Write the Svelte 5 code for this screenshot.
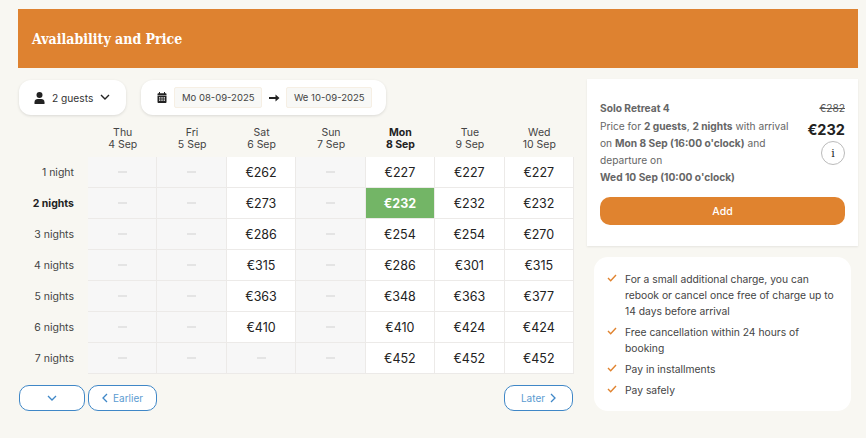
<script>
  const days = [
    { name: "Thu", date: "4 Sep" },
    { name: "Fri", date: "5 Sep" },
    { name: "Sat", date: "6 Sep" },
    { name: "Sun", date: "7 Sep" },
    { name: "Mon", date: "8 Sep", active: true },
    { name: "Tue", date: "9 Sep" },
    { name: "Wed", date: "10 Sep" }
  ];

  const rows = [
    { label: "1 night", prices: [0, 0, 262, 0, 227, 227, 227] },
    { label: "2 nights", bold: true, prices: [0, 0, 273, 0, 232, 232, 232] },
    { label: "3 nights", prices: [0, 0, 286, 0, 254, 254, 270] },
    { label: "4 nights", prices: [0, 0, 315, 0, 286, 301, 315] },
    { label: "5 nights", prices: [0, 0, 363, 0, 348, 363, 377] },
    { label: "6 nights", prices: [0, 0, 410, 0, 410, 424, 424] },
    { label: "7 nights", prices: [0, 0, 0, 0, 452, 452, 452] }
  ];

  const perks = [
    "For a small additional charge, you can rebook or cancel once free of charge up to 14 days before arrival",
    "Free cancellation within 24 hours of booking",
    "Pay in installments",
    "Pay safely"
  ];
</script>

<div class="page">
  <header class="banner"><h1>Availability and Price</h1></header>

  <div class="columns">
    <section class="left">
      <div class="controls">
        <button class="pill guests">
          <svg width="11" height="12" viewBox="0 0 11 12"><circle cx="5.5" cy="3" r="3" fill="#222" /><path d="M0.5 12V10.2C0.5 8.2 2 7 3.8 7H7.2C9 7 10.5 8.2 10.5 10.2V12Z" fill="#222" /></svg>
          <span>2 guests</span>
          <svg width="10" height="7" viewBox="0 0 10 7"><path d="M1 1L5 5L9 1" fill="none" stroke="#222" stroke-width="1.4" /></svg>
        </button>
        <div class="pill dates">
          <svg width="10" height="11" viewBox="0 0 10 11"><path d="M0.5 2.2C0.5 1.6 1 1.2 1.5 1.2H2V0H3V1.2H7V0H8V1.2H8.5C9 1.2 9.5 1.6 9.5 2.2V3.4H0.5ZM0.5 4H9.5V10C9.5 10.6 9 11 8.5 11H1.5C1 11 0.5 10.6 0.5 10ZM2 5.2V6.4H3.4V5.2ZM4.3 5.2V6.4H5.7V5.2ZM6.6 5.2V6.4H8V5.2ZM2 7.6V8.8H3.4V7.6ZM4.3 7.6V8.8H5.7V7.6ZM6.6 7.6V8.8H8V7.6Z" fill="#222" fill-rule="evenodd" /></svg>
          <span class="date">Mo 08-09-2025</span>
          <svg width="11" height="8" viewBox="0 0 11 8"><path d="M0 3H6.5V0.5L10.5 4L6.5 7.5V5H0Z" fill="#222" /></svg>
          <span class="date">We 10-09-2025</span>
        </div>
      </div>

      <div class="table">
        <div class="corner"></div>
        {#each days as day}
          <div class="head" class:active={day.active}>{day.name}<br />{day.date}</div>
        {/each}

        {#each rows as row}
          <div class="label" class:bold={row.bold}>{row.label}</div>
          {#each row.prices as price, i}
            {#if price}
              <div class="cell" class:selected={row.bold && i === 4}>€{price}</div>
            {:else}
              <div class="cell empty"><i></i></div>
            {/if}
          {/each}
        {/each}
      </div>

      <div class="pager">
        <button class="nav down" aria-label="More nights">
          <svg width="10" height="6" viewBox="0 0 10 6"><path d="M1 1L5 5L9 1" fill="none" stroke="#3f87c7" stroke-width="1.3" /></svg>
        </button>
        <button class="nav earlier">
          <svg width="6" height="10" viewBox="0 0 6 10"><path d="M5 1L1 5L5 9" fill="none" stroke="#3f87c7" stroke-width="1.3" /></svg>
          Earlier
        </button>
        <button class="nav later">
          Later
          <svg width="6" height="10" viewBox="0 0 6 10"><path d="M1 1L5 5L1 9" fill="none" stroke="#3f87c7" stroke-width="1.3" /></svg>
        </button>
      </div>
    </section>

    <aside class="right">
      <div class="summary">
        <div class="summary-top">
          <div class="text">
            <strong class="title">Solo Retreat 4</strong>
            <p>Price for <b>2 guests</b>, <b>2 nights</b> with arrival on <b>Mon 8 Sep (16:00 o'clock)</b> and departure on <br /><b>Wed 10 Sep (10:00 o'clock)</b></p>
          </div>
          <div class="price">
            <s>€282</s>
            <span class="total">€232</span>
            <span class="info">i</span>
          </div>
        </div>
        <button class="add">Add</button>
      </div>

      <ul class="perks">
        {#each perks as perk}
          <li>
            <svg width="10" height="8" viewBox="0 0 10 8"><path d="M1 4L3.7 6.7L9 1" fill="none" stroke="#e0832f" stroke-width="1.4" /></svg>
            <span>{perk}</span>
          </li>
        {/each}
      </ul>
    </aside>
  </div>
</div>

<style>
  :global(body) {
    background: #f8f7f2;
    font-family: "Inter", "Liberation Sans", sans-serif;
    color: #222;
  }

  .page {
    width: 866px;
    height: 438px;
    box-sizing: border-box;
    padding: 9px 8px 0 18px;
    overflow: hidden;
  }

  .banner {
    height: 59px;
    background: #de8230;
    display: flex;
    align-items: center;
    padding-left: 14px;
  }

  h1 {
    margin: 0;
    font-family: "DejaVu Serif", serif;
    font-stretch: condensed;
    font-weight: 700;
    font-size: 14px;
    color: #fff;
  }

  .columns {
    display: flex;
    justify-content: space-between;
  }

  .left {
    width: 556px;
    padding-top: 12px;
  }

  .controls {
    display: flex;
    gap: 15px;
    padding-left: 1px;
  }

  .pill {
    height: 35px;
    box-sizing: border-box;
    background: #fff;
    border: 0;
    border-radius: 12px;
    box-shadow: 0 1px 3px rgba(0, 0, 0, 0.12);
    display: flex;
    align-items: center;
    font-family: inherit;
    font-size: 10.2px;
    color: #333;
  }

  .guests {
    width: 107px;
    padding: 0 0 0 15px;
    gap: 7px;
  }

  .dates {
    width: 245px;
    padding-left: 16px;
    gap: 7px;
  }

  .date {
    height: 21px;
    box-sizing: border-box;
    padding: 0 7px;
    background: #f8f8f6;
    border: 1px solid #f6efe4;
    border-radius: 2px;
    display: flex;
    align-items: center;
    font-size: 9.5px;
    color: #444;
  }

  .date:last-child {
    padding: 0 6.5px;
    margin-left: -1px;
  }

  .table {
    display: grid;
    grid-template-columns: 70px repeat(7, 1fr);
    grid-template-rows: 32px repeat(7, 31px);
    margin-top: 10px;
  }

  .head {
    padding-top: 2px;
    text-align: center;
    font-size: 10.5px;
    line-height: 12px;
    color: #444;
  }

  .head.active {
    font-weight: 700;
    color: #222;
  }

  .label {
    display: flex;
    align-items: center;
    justify-content: flex-end;
    padding-right: 14px;
    font-size: 10.5px;
    color: #444;
  }

  .label.bold {
    font-weight: 700;
    color: #222;
  }

  .cell {
    background: #fff;
    border-right: 1px solid #eceae8;
    border-bottom: 1px solid #eceae8;
    display: flex;
    align-items: center;
    justify-content: center;
    font-size: 12.5px;
    color: #222;
  }

  .cell.empty {
    background: #f7f7f7;
  }

  .cell.empty i {
    width: 9px;
    height: 2px;
    background: #e4e4e4;
  }

  .cell.selected {
    background: #73b566;
    color: #fff;
    font-weight: 700;
  }

  .pager {
    display: flex;
    gap: 3px;
    margin-top: 11px;
    padding-left: 1px;
  }

  .nav {
    height: 26px;
    box-sizing: border-box;
    background: #fff;
    border: 1px solid #3f87c7;
    border-radius: 10px;
    display: flex;
    align-items: center;
    justify-content: center;
    gap: 5px;
    padding: 0;
    font-family: inherit;
    font-size: 10px;
    color: #5b9bd1;
  }

  .down {
    width: 66px;
  }

  .earlier {
    width: 69px;
  }

  .later {
    width: 69px;
    margin-left: auto;
    margin-right: 1px;
  }

  .right {
    width: 271px;
    padding-top: 11px;
  }

  .summary {
    height: 167px;
    box-sizing: border-box;
    padding: 21px 13px 0;
    background: #fff;
    box-shadow: 0 1px 2px rgba(0, 0, 0, 0.08);
  }

  .summary-top {
    display: flex;
    justify-content: space-between;
    height: 96px;
  }

  .text {
    width: 194px;
    font-size: 10.2px;
    line-height: 17px;
    color: #666;
  }

  .title {
    display: block;
    line-height: 17px;
    margin-bottom: 1px;
  }

  p {
    margin: 0;
  }

  .price {
    display: flex;
    flex-direction: column;
    align-items: flex-end;
  }

  s {
    font-size: 10.2px;
    line-height: 17px;
    color: #555;
  }

  .total {
    font-size: 14.5px;
    font-weight: 700;
    line-height: 20px;
    margin-top: 3px;
    color: #222;
  }

  .info {
    width: 24px;
    height: 24px;
    box-sizing: border-box;
    margin-top: 1px;
    border: 1px solid #bbb;
    border-radius: 50%;
    display: flex;
    align-items: center;
    justify-content: center;
    font-family: "DejaVu Serif", serif;
    font-size: 11px;
  }

  .add {
    display: block;
    width: 100%;
    height: 28px;
    margin-top: 1px;
    background: #e0832f;
    border: 0;
    border-radius: 10px;
    font-family: inherit;
    font-size: 10.5px;
    font-weight: 500;
    color: #fff;
  }

  .perks {
    width: 257px;
    height: 154px;
    box-sizing: border-box;
    margin: 11px 0 0 7px;
    padding: 14px 15px 0 13px;
    background: #fff;
    border-radius: 14px;
    list-style: none;
  }

  li {
    display: flex;
    gap: 8px;
    margin-bottom: 5px;
    font-size: 10.3px;
    line-height: 16px;
    color: #444;
  }

  li svg {
    flex: none;
    margin-top: 3px;
  }
</style>
